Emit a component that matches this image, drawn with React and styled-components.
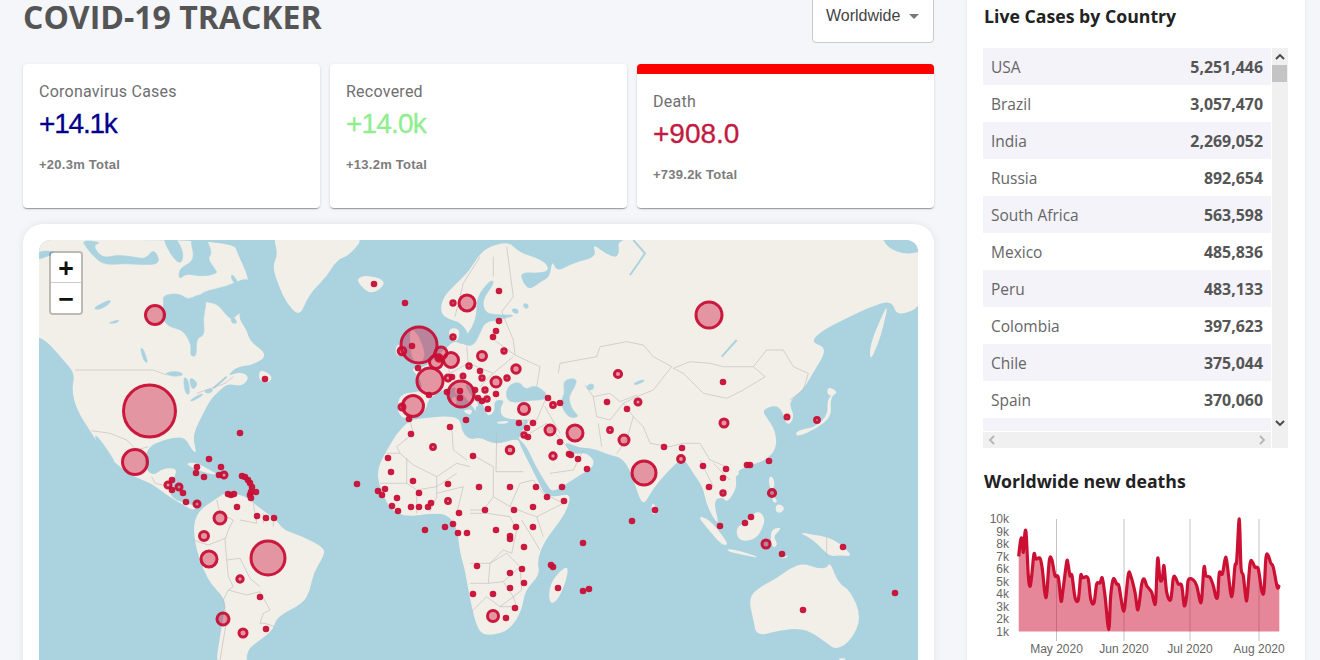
import React from 'react'
import styled, { createGlobalStyle } from 'styled-components'

const GlobalStyle = createGlobalStyle`
  html, body {
    margin: 0;
    height: 660px;
    overflow: hidden;
    background: #f4f6fa;
  }
  * { box-sizing: border-box; }
`

const Page = styled.div`
  display: flex;
  align-items: flex-start;
  margin-top: -20px;
  padding-left: 23px;
  font-family: "Liberation Sans", Arial, sans-serif;
`
const LeftColumn = styled.div`
  width: 911px;
  flex-shrink: 0;
`
const Header = styled.div`
  display: flex;
  justify-content: space-between;
  align-items: flex-start;
  height: 84px;
`
const Title = styled.h1`
  margin: 20px 0 0;
  font-family: "Open Sans", "Noto Sans", sans-serif;
  font-size: 32px;
  line-height: 34px;
  font-weight: 700;
  color: #555;
`
const Dropdown = styled.div`
  width: 122px;
  height: 63px;
  display: flex;
  align-items: flex-start;
  gap: 9px;
  padding: 24px 0 0 13px;
  background: #fff;
  border: 1px solid #c9c9c9;
  border-radius: 4px;
  font-size: 16px;
  line-height: 22px;
  color: #444;
`
const Caret = styled.span`
  width: 0;
  height: 0;
  margin-top: 9px;
  border-left: 5px solid transparent;
  border-right: 5px solid transparent;
  border-top: 5px solid #777;
`
const StatsRow = styled.div`
  display: flex;
  gap: 10px;
`
const StatCard = styled.div`
  flex: 1;
  height: 144px;
  padding: 17px 16px 16px;
  background: #fff;
  border-radius: 4px;
  border-top: ${p => (p.$active ? '10px solid #f00' : '0 solid transparent')};
  box-shadow: 0 2px 1px -1px rgba(0, 0, 0, 0.2), 0 1px 1px 0 rgba(0, 0, 0, 0.14), 0 1px 3px 0 rgba(0, 0, 0, 0.12);
`
const StatLabel = styled.div`
  font-family: Roboto, "Liberation Sans", sans-serif;
  font-size: 16px;
  line-height: 22px;
  letter-spacing: 0.25px;
  color: #6f6f6f;
`
const StatValue = styled.div`
  margin-top: 3px;
  font-size: 28px;
  line-height: 36px;
  letter-spacing: ${p => p.$spacing};
  color: ${p => p.$color};
  -webkit-text-stroke: 0.3px currentColor;
`
const StatTotal = styled.div`
  margin-top: 14px;
  font-size: 13px;
  line-height: 18px;
  letter-spacing: 0.25px;
  font-weight: 700;
  color: #7c7c7c;
`
const MapCard = styled.div`
  margin-top: 16px;
  padding: 16px;
  height: 480px;
  background: #fff;
  border-radius: 20px;
  box-shadow: 0 0 8px rgba(0, 0, 0, 0.08);
`
const MapFrame = styled.div`
  position: relative;
  height: 448px;
  overflow: hidden;
  border-radius: 12px 12px 0 0;
  background: #aad3df;
`
const MapSvg = styled.svg`
  display: block;
  width: 879px;
  height: 420px;
`
const ZoomControl = styled.div`
  position: absolute;
  top: 11px;
  left: 10px;
  width: 34px;
  border: 2px solid rgba(0, 0, 0, 0.22);
  border-radius: 4px;
  background-clip: padding-box;
`
const ZoomButton = styled.div`
  height: 30px;
  display: flex;
  align-items: center;
  justify-content: center;
  background: #fff;
  color: #111;
  font-family: "DejaVu Sans Mono", monospace;
  font-size: 25px;
  font-weight: 700;
  border-bottom: ${p => (p.$top ? '1px solid #ccc' : 'none')};
  border-radius: ${p => (p.$top ? '2px 2px 0 0' : '0 0 2px 2px')};
`
const Sidebar = styled.aside`
  width: 338px;
  height: 700px;
  flex-shrink: 0;
  margin-left: 33px;
  padding: 24px 17px 0 16px;
  background: #fff;
  box-shadow: 0 0 3px rgba(40, 50, 90, 0.12);
`
const SideTitle = styled.h3`
  margin: 0;
  padding-left: 1px;
  font-family: "Open Sans", "Noto Sans", sans-serif;
  font-size: 17.7px;
  line-height: 24px;
  font-weight: 700;
  color: #222;
`
const TableWrap = styled.div`
  display: flex;
  height: 400px;
  margin: 20px 0 21px;
`
const TableBody = styled.div`
  width: 288px;
  display: flex;
  flex-direction: column;
`
const Rows = styled.div`
  height: 383px;
  overflow: hidden;
`
const Row = styled.div`
  height: 37px;
  display: flex;
  justify-content: space-between;
  align-items: center;
  padding: 0 8px;
  font-family: "Open Sans", "Noto Sans", sans-serif;
  background: ${p => (p.$odd ? '#f3f3f9' : '#fff')};
`
const Country = styled.span`
  font-size: 15.5px;
  color: #666;
`
const Amount = styled.span`
  font-size: 15.9px;
  font-weight: 700;
  color: #555;
`
const HScrollBar = styled.div`
  height: 16px;
  margin-top: 1px;
  display: flex;
  justify-content: space-between;
  align-items: center;
  padding: 0 4px;
  background: #f0f0f0;
`
const VScrollBar = styled.div`
  width: 16px;
  margin-left: 1px;
  background: #f0f0f0;
  display: flex;
  flex-direction: column;
  align-items: center;
`
const ScrollArrow = styled.svg`
  display: block;
  flex-shrink: 0;
  margin: ${p => p.$margin || '0'};
`
const ScrollThumb = styled.div`
  width: 15px;
  height: 17px;
  margin-top: 3px;
  margin-left: -1px;
  background: #c4c4c4;
`
const ChartSvg = styled.svg`
  display: block;
  margin-top: 16px;
  margin-left: -3px;
  width: 310px;
  height: 150px;
  font-family: "Liberation Sans", Arial, sans-serif;
  font-size: 12px;
  fill: #666;
`

// shape coordinates are read off zoomed crops: x = ox + zx / 3, y = oy + zy / 3
const crop = (ox, oy) => str =>
  str.trim().split(/\s+/).map(pair => {
    const [x, y] = pair.split(',').map(Number)
    return `${(ox + x / 3).toFixed(1)},${(oy + y / 3).toFixed(1)}`
  }).join(' ')
const west = crop(20, 220)
const east = crop(470, 220)
const europe = crop(380, 240)
const canada = crop(39, 240)
const russia = crop(460, 240)

const toPoints = str => str.trim().split(/\s+/).map(pair => pair.split(',').map(Number))

// closed shape with its corners rounded: curve from edge middle to edge middle
const roundedShape = str => {
  const pts = toPoints(str)
  const mid = (a, b) => [(a[0] + b[0]) / 2, (a[1] + b[1]) / 2]
  const start = mid(pts[pts.length - 1], pts[0])
  let d = `M${start[0]} ${start[1]}`
  pts.forEach((p, i) => {
    const m = mid(p, pts[(i + 1) % pts.length])
    d += `Q${p[0]} ${p[1]} ${m[0]} ${m[1]}`
  })
  return d + 'Z'
}

// catmull-rom through every point, for the chart line
const smoothLine = pts => {
  let d = ''
  for (let i = 0; i < pts.length - 1; i++) {
    const p0 = pts[i - 1] || pts[i]
    const p1 = pts[i]
    const p2 = pts[i + 1]
    const p3 = pts[i + 2] || p2
    const c1 = [p1[0] + (p2[0] - p0[0]) / 6, p1[1] + (p2[1] - p0[1]) / 6]
    const c2 = [p2[0] - (p3[0] - p1[0]) / 6, p2[1] - (p3[1] - p1[1]) / 6]
    d += `C${c1[0].toFixed(1)} ${c1[1].toFixed(1)} ${c2[0].toFixed(1)} ${c2[1].toFixed(1)} ${p2[0].toFixed(1)} ${p2[1].toFixed(1)}`
  }
  return d
}

const land = [
  // north america
  west('57,60 637,60 657,110 685,170 690,240 650,285 680,330 690,365 745,405 700,435 650,440 620,470 660,455 690,470 665,500 625,490 600,510 570,540 545,590 525,630 520,660 530,700 515,690 500,660 480,650 430,660 385,680 370,730 395,770 430,745 470,745 465,770 445,800 455,835 495,850 535,858 520,872 490,855 440,825 395,790 340,770 285,730 240,680 215,640 170,570 155,510 165,460 130,420 100,385 75,360 40,345 40,40'),
  west('720,445 760,470 745,490 715,480'),
  west('495,730 530,727 570,750 595,765 560,760 520,745'),
  west('590,760 625,762 625,775 600,775'),
  west('755,40 1040,40 990,105 950,120 920,170 880,210 860,240 838,290 800,250 775,195 757,140 775,100'),
  west('1010,175 1040,165 1095,180 1085,205 1050,222 1020,195'),
  // south america
  west('525,880 590,835 620,815 680,830 700,850 770,900 790,930 850,950 915,985 910,1010 880,1060 870,1110 850,1150 770,1190 760,1230 720,1260 680,1290 680,1345 585,1345 600,1250 610,1190 620,1140 560,1080 520,960'),
  // africa
  '410,420 425,418 445,416 460,418 462,432 470,440 480,437 495,445 518,438 520,445 530,465 540,485 545,495 555,497 572,493 565,515 545,540 537,560 540,575 525,590 522,610 510,630 490,636 478,632 470,600 465,570 460,553 457,527 448,515 433,513 407,517 390,510 378,483 378,467 387,450 397,433',
  east('290,1035 295,1060 270,1130 245,1155 235,1130 245,1080'),
  // eurasia
  '409,418 418,416 426,410 428,400 436,394 443,390 450,388 457,387 470,403 477,413 475,407 480,405 468,392 465,383 470,387 483,403 487,417 495,412 494,400 505,400 500,408 502,418 520,420 530,420 523,428 520,437 518,438 527,447 535,465 547,485 553,493 575,478 597,465 587,452 572,455 563,441 580,448 592,448 610,455 622,458 630,470 635,485 643,507 652,490 667,472 683,457 693,473 703,487 707,507 720,528 713,500 723,497 727,503 737,488 735,472 750,465 767,460 777,447 775,430 767,418 762,410 775,405 782,410 787,427 795,417 788,402 803,390 813,373 828,348 810,342 823,330 847,318 870,307 892,300 897,317 925,305 925,250 907,255 887,248 880,232 617,232 620,258 607,255 592,243 597,257 573,263 557,272 552,260 550,277 540,282 530,290 523,283 520,272 540,273 550,270 543,260 518,252 510,242 493,245 480,253 470,270 457,283 443,297 440,313 450,320 460,322 470,335 462,345 458,342 452,342 447,348 437,355 425,368 410,368 420,378 423,392 400,393 397,410 402,418',
  // british isles and mediterranean islands
  europe('90,260 120,290 140,360 100,370 90,320'),
  europe('50,310 80,320 70,350 45,345'),
  europe('205,265 240,265 235,305 210,300'),
  europe('245,510 280,508 270,528'),
  europe('215,470 230,470 228,500 215,500'),
  europe('225,445 232,445 232,462 226,462'),
  europe('350,545 385,542 385,550 352,552'),
  europe('415,545 435,540 425,555'),
  // east asia and oceania
  east('1255,250 1240,320 1225,370 1200,425 1200,375 1230,300'),
  east('1100,510 1070,540 1075,580 1040,620 990,630 975,640 985,650 1040,625 1085,590 1080,540'),
  east('1075,500 1105,515 1085,530 1070,520'),
  east('890,720 905,712 900,740'),
  east('790,755 810,755 800,772'),
  east('895,770 910,770 915,800 900,810'),
  east('920,850 945,860 935,880 915,875'),
  east('905,825 925,845 910,850'),
  east('680,885 720,900 760,950 775,975 755,975 720,935'),
  east('770,985 820,995 875,1015 820,1005 775,995'),
  east('800,920 830,905 860,870 885,890 880,920 860,955 820,965 800,950'),
  east('900,930 935,920 925,935 910,950 925,975 905,985'),
  east('925,1015 960,1005 945,1015'),
  east('985,935 1030,945 1070,950 1110,970 1150,1010 1110,1005 1080,1010 1060,990 1030,960'),
  east('835,1130 880,1095 920,1075 960,1045 1000,1030 1040,1045 1070,1045 1080,1025 1105,1090 1140,1110 1175,1190 1145,1260 1100,1290 1070,1270 1030,1240 990,1225 930,1230 860,1250 850,1200'),
  east('1100,1315 1130,1315 1120,1325'),
  east('545,845 562,865 555,885 545,880'),
]

const water = [
  // canadian arctic, hudson bay
  canada('130,0 190,8 160,15 190,55 230,45 280,50 320,58 345,25 365,70 320,75 260,70 195,75 165,50 140,20'),
  canada('370,-10 410,-10 435,40 425,75 395,45'),
  canada('450,-10 500,-10 520,40 505,55 530,90 535,100 490,110 440,100 420,120 420,85 470,60'),
  canada('-5,35 30,32 52,42 25,48 -5,60'),
  canada('580,100 605,140 595,140 575,115'),
  west('547,215 620,200 685,170 700,210 690,260 650,285 635,300 615,280 590,250 550,245 530,240'),
  west('622,270 657,310 632,310 635,285'),
  west('425,290 432,250 428,225 478,220 505,240 530,225 547,225 560,250 548,295 555,345 528,355 530,410 510,408 515,375 490,330 445,320'),
  west('222,640 245,665 285,725 278,730 235,680'),
  west('430,460 470,452 495,465 460,470'),
  west('490,470 505,478 510,525 495,520'),
  west('510,470 535,490 520,510 510,495'),
  west('510,540 545,520 550,525 515,545'),
  west('555,510 580,505 575,518 555,520'),
  west('360,385 370,385 385,430 372,425'),
  west('220,265 245,250 275,238 265,255 235,270'),
  west('260,310 300,298 290,310'),
  // baltic, black sea, caspian
  '490,280 495,282 482,300 485,313 498,315 518,315 497,320 485,322 480,333 473,347 460,343 463,340 473,327 477,313 477,297',
  russia('155,205 175,208 175,222 158,218'),
  russia('190,190 205,192 205,206 192,204'),
  '506,392 510,384 520,382 525,390 535,385 547,393 545,400 530,400 515,403 507,400',
  '563,380 577,378 575,387 568,397 572,410 580,417 568,418 560,403 565,393',
  east('350,495 372,490 370,510 352,510'),
  east('490,490 520,478 525,484 495,496'),
]

const rivers = [
  west('580,505 620,470'),
  east('490,60 525,100 505,130 480,165'),
  east('755,410 800,360'),
]

const borders = [
  west('165,450 400,450 440,465'), west('530,520 615,490 640,470'),
  west('215,632 270,640 320,660 350,690 385,680'), west('395,770 405,790 450,800'),
  west('590,840 600,880 640,900 625,930 615,960 620,1020 660,1015 690,1075 720,1100'),
  west('520,960 565,975 615,955'), west('620,1020 625,1070 640,1100 625,1110 610,1140 620,1200 600,1320'),
  west('625,1110 680,1125 720,1115 750,1170 730,1180 720,1210 735,1210 765,1220'),
  west('700,850 710,910 660,900'), west('730,880 730,910'), west('760,890 760,920'),
  west('1170,600 1180,640 1130,680 1140,700 1100,700'), west('1295,620 1300,690 1340,720'),
  west('1140,700 1180,735 1250,770 1310,730 1350,740'), west('1160,715 1160,790 1190,810 1250,800 1310,760'),
  west('1250,770 1250,830 1230,875'), west('1330,800 1310,880'), west('1080,790 1160,790'),
  west('1190,810 1190,880'), west('1330,800 1250,820'),
  east('80,640 78,755 160,755'), east('0,700 70,740 70,830 40,870 0,870'),
  east('70,830 120,860 150,790 190,780 220,820 280,850 200,890 170,880 120,860'),
  east('200,890 220,950'), east('155,900 210,990'),
  east('0,880 50,880 120,890 140,930 125,1000 100,990 60,1030 0,1030'),
  east('60,1030 55,1090 0,1090'), east('60,1030 110,1000 150,1040 100,1085 55,1090'),
  east('150,1040 155,1110 130,1130'), east('100,1085 130,1130 90,1160 50,1130 0,1180'),
  east('130,1130 140,1160 90,1160'),
  east('265,460 270,430 380,410 390,380 470,365 520,375 550,410 605,440'),
  east('610,445 660,425 720,430 760,440 850,440 885,470 820,510 770,535 700,520 640,460 610,445'),
  east('850,440 890,390 940,390 970,440 1015,460 1000,510 960,540'),
  east('605,440 550,510 500,530 460,550 490,590 520,620 540,670 600,680 640,670 690,670 720,720 770,740'),
  east('345,495 370,530 420,520 450,545 500,525'), east('370,530 380,590 420,600 460,550'),
  east('385,610 395,680'), east('490,590 470,660 440,700'), east('225,560 270,640'),
  east('130,600 200,600 230,530'), east('180,640 230,610 300,690'), east('240,760 310,750 340,690'),
  east('690,720 730,800'), east('730,730 780,780'), east('1070,950 1070,1010'),
  europe('200,370 210,400 205,430'), europe('110,450 150,470'), europe('260,320 265,370 340,400'),
  europe('335,295 405,345 480,380 470,440'), europe('400,350 340,400 300,440'), europe('300,50 250,130 225,230'),
  europe('340,50 340,110'), europe('380,20 400,170 365,215 400,300 405,345'), europe('265,370 210,400'),
]

// x, y, radius in page coordinates; two values means a small dot
const markers = [
  [149.5, 411, 26], [268, 558, 17], [135, 462, 12.5], [155, 315, 9.5], [209, 559, 8], [220, 518, 6], [204, 536, 4.5], [223, 619, 6], [243, 633, 4], [240, 579, 3.2],
  [374, 284], [405, 303], [265, 379], [240, 433], [209, 459], [197, 467], [196, 473], [204, 477], [221, 467], [219, 475], [224, 475, 3],
  [242, 476], [245, 477], [248, 480], [250, 483], [252, 487], [251, 492], [256, 492], [250, 495], [251, 498], [228, 494], [231, 495], [234, 494], [237, 507], [257, 516], [266, 518], [274, 518],
  [168, 485, 3], [172, 480], [172, 490], [179, 487, 3], [183, 493], [186, 502], [197, 504, 3], [260, 597], [266, 629],
  [357, 484], [378, 491], [382, 495], [385, 489], [392, 506], [397, 498], [398, 511], [413, 481], [419, 493], [411, 507], [419, 507], [428, 507], [431, 503], [448, 501, 2.4], [448, 484], [459, 513], [458, 533], [467, 533], [445, 527], [425, 530], [453, 524],
  [388, 458], [391, 472], [411, 434], [433, 447, 2.4], [450, 427], [466, 420], [409, 419],
  [499, 291], [453, 303, 2.2], [467, 303, 8], [453, 337, 2.2],
  [441, 353, 6], [451, 360, 7.5], [419, 345, 18], [402, 351, 3.8], [412, 346], [436, 362, 6.5], [439, 358, 3.2], [418, 368], [430, 381, 13], [413, 406, 10.5], [402, 407, 3], [461, 394, 13], [460, 391], [460, 398], [448, 378, 3], [452, 377], [463, 376, 2], [469, 366, 2.2], [482, 356, 4.5], [504, 351, 2.2], [516, 369, 4.2], [480, 371], [482, 378, 2.2], [496, 382, 5], [507, 378, 2.2], [475, 390], [485, 390, 2.2], [496, 394], [478, 398], [482, 401], [487, 399, 2.2], [488, 409], [429, 395], [447, 392],
  [499, 321], [496, 331], [493, 337],
  [524, 409, 5.5], [548, 398], [553, 405, 2.4], [560, 403], [519, 423], [533, 423], [527, 428], [524, 435, 2.2], [528, 437], [550, 430, 5], [575, 433, 8], [618, 374, 3.6], [709, 315, 13], [607, 402], [627, 409], [610, 430, 2.4], [624, 440, 5], [644, 473, 12], [638, 402, 3], [664, 447], [682, 448], [681, 459, 3.4],
  [723, 382], [724, 423, 4], [787, 417, 2], [817, 420, 2.4], [769, 461], [747, 465], [750, 465], [703, 466], [726, 469], [723, 478], [709, 487], [723, 493, 2.2], [772, 493, 3.6], [751, 517], [745, 523], [720, 526], [766, 544, 4], [782, 554], [843, 547], [803, 610], [895, 593], [655, 510], [632, 521], [583, 591], [589, 589], [583, 543], [551, 565], [553, 567], [558, 588],
  [553, 456, 3.2], [560, 442], [569, 454], [571, 455], [578, 459], [587, 469], [562, 487], [510, 450, 3.8], [473, 456], [510, 487], [479, 487], [536, 487], [547, 497], [564, 501], [533, 507], [514, 510], [485, 510], [533, 527], [516, 527], [510, 536], [510, 539], [496, 530], [524, 547], [477, 566], [510, 573], [522, 569], [524, 583], [510, 588], [493, 594], [473, 594], [493, 616, 5.5], [506, 618], [515, 608],
]

const countries = [
  ['USA', '5,251,446'], ['Brazil', '3,057,470'], ['India', '2,269,052'], ['Russia', '892,654'], ['South Africa', '563,598'],
  ['Mexico', '485,836'], ['Peru', '483,133'], ['Colombia', '397,623'], ['Chile', '375,044'], ['Spain', '370,060'], ['', ''],
]

const deaths = '176,532 182,482 187,482 190,520 195,460 199,470 205,590 210,622 215,590 222,525 228,540 240,538 247,570 255,645 260,645 268,545 275,540 285,590 295,595 303,665 308,640 320,548 325,560 330,590 336,590 345,655 355,662 362,590 368,596 384,598 392,660 402,672 410,615 420,612 427,597 435,650 446,752 452,650 460,600 470,615 477,622 488,688 494,685 505,587 512,590 525,640 534,692 545,615 553,600 560,620 575,640 582,668 587,665 593,538 600,600 607,600 612,560 620,640 632,662 640,597 647,597 655,615 665,620 673,680 680,650 685,603 700,603 710,620 720,665 725,660 732,565 738,590 750,595 760,620 767,652 773,652 778,582 787,585 795,542 800,545 812,643 818,640 825,560 830,545 838,420 843,565 850,590 858,660 862,650 870,555 877,548 885,565 895,570 905,635 912,635 918,535 925,530 932,552 940,565 952,625 958,617'
const deathPoints = toPoints(crop(960, 380)(deaths))
const deathCurve = smoothLine(deathPoints)
const [firstX, firstY] = deathPoints[0]
const deathLine = `M${firstX} ${firstY}${deathCurve}`
const deathArea = `M1018.7 632.5L${firstX} ${firstY}${deathCurve}L1279.3 632.5Z`

const yTicks = ['10k', '9k', '8k', '7k', '6k', '5k', '4k', '3k', '2k', '1k']
const xTicks = [[1056.5, 'May 2020'], [1124, 'Jun 2020'], [1190, 'Jul 2020'], [1259, 'Aug 2020']]

function WorldMap() {
  return (
    <MapSvg viewBox="39 240 879 420">
      <rect x="39" y="240" width="879" height="420" fill="#aad3df" />
      {land.map((p, i) => <path key={i} d={roundedShape(p)} fill="#f2efe9" />)}
      {water.map((p, i) => <path key={i} d={roundedShape(p)} fill="#aad3df" stroke="#aad3df" strokeWidth="0.6" />)}
      {rivers.map((p, i) => <polyline key={i} points={p} fill="none" stroke="#aad3df" strokeWidth="2" />)}
      {borders.map((p, i) => <polyline key={i} points={p} fill="none" stroke="#bfb7bc" strokeWidth="0.6" />)}
      {markers.map(([x, y, r = 1.8], i) => (
        <circle key={i} cx={x} cy={y} r={r} fill="#cc1034" fillOpacity="0.4" stroke="#c80f36" strokeOpacity="0.95" strokeWidth="3" />
      ))}
    </MapSvg>
  )
}

function NewDeathsChart() {
  return (
    <ChartSvg viewBox="980 510 310 150">
      {xTicks.map(([x]) => <line key={x} x1={x} x2={x} y1="520" y2="642" stroke="#c4c4c4" strokeWidth="1" />)}
      <path d={deathArea} fill="#cc1034" fillOpacity="0.5" />
      <path d={deathLine} fill="none" stroke="#cc1034" strokeWidth="3.2" strokeLinejoin="round" />
      {yTicks.map((t, i) => <text key={t} x="1009" y={524 + i * 12.5} textAnchor="end">{t}</text>)}
      {xTicks.map(([x, t]) => <text key={t} x={x} y="654" textAnchor="middle">{t}</text>)}
    </ChartSvg>
  )
}

const Chevron = ({ points, color, margin }) => (
  <ScrollArrow $margin={margin} width="10" height="10" viewBox="0 0 10 10">
    <polyline points={points} fill="none" stroke={color} strokeWidth="1.8" />
  </ScrollArrow>
)

export default function App() {
  return (
    <Page>
      <GlobalStyle />
      <LeftColumn>
        <Header>
          <Title>COVID-19 TRACKER</Title>
          <Dropdown>Worldwide<Caret /></Dropdown>
        </Header>
        <StatsRow>
          <StatCard>
            <StatLabel>Coronavirus Cases</StatLabel>
            <StatValue $color="#00008b" $spacing="-1.2px">+14.1k</StatValue>
            <StatTotal>+20.3m Total</StatTotal>
          </StatCard>
          <StatCard>
            <StatLabel>Recovered</StatLabel>
            <StatValue $color="#90ee90" $spacing="-0.8px">+14.0k</StatValue>
            <StatTotal>+13.2m Total</StatTotal>
          </StatCard>
          <StatCard $active>
            <StatLabel>Death</StatLabel>
            <StatValue $color="#c21a40" $spacing="0">+908.0</StatValue>
            <StatTotal>+739.2k Total</StatTotal>
          </StatCard>
        </StatsRow>
        <MapCard>
          <MapFrame>
            <WorldMap />
            <ZoomControl>
              <ZoomButton $top>+</ZoomButton>
              <ZoomButton>−</ZoomButton>
            </ZoomControl>
          </MapFrame>
        </MapCard>
      </LeftColumn>
      <Sidebar>
        <SideTitle>Live Cases by Country</SideTitle>
        <TableWrap>
          <TableBody>
            <Rows>
              {countries.map(([name, cases], i) => (
                <Row key={i} $odd={i % 2 === 0}>
                  <Country>{name}</Country>
                  <Amount>{cases}</Amount>
                </Row>
              ))}
            </Rows>
            <HScrollBar>
              <Chevron points="7,1 3,5 7,9" color="#b5b5b5" />
              <Chevron points="3,1 7,5 3,9" color="#b5b5b5" />
            </HScrollBar>
          </TableBody>
          <VScrollBar>
            <Chevron points="1,7 5,3 9,7" color="#444" margin="4px 0 0" />
            <ScrollThumb />
            <Chevron points="1,3 5,7 9,3" color="#444" margin="336px 0 0" />
          </VScrollBar>
        </TableWrap>
        <SideTitle>Worldwide new deaths</SideTitle>
        <NewDeathsChart />
      </Sidebar>
    </Page>
  )
}
